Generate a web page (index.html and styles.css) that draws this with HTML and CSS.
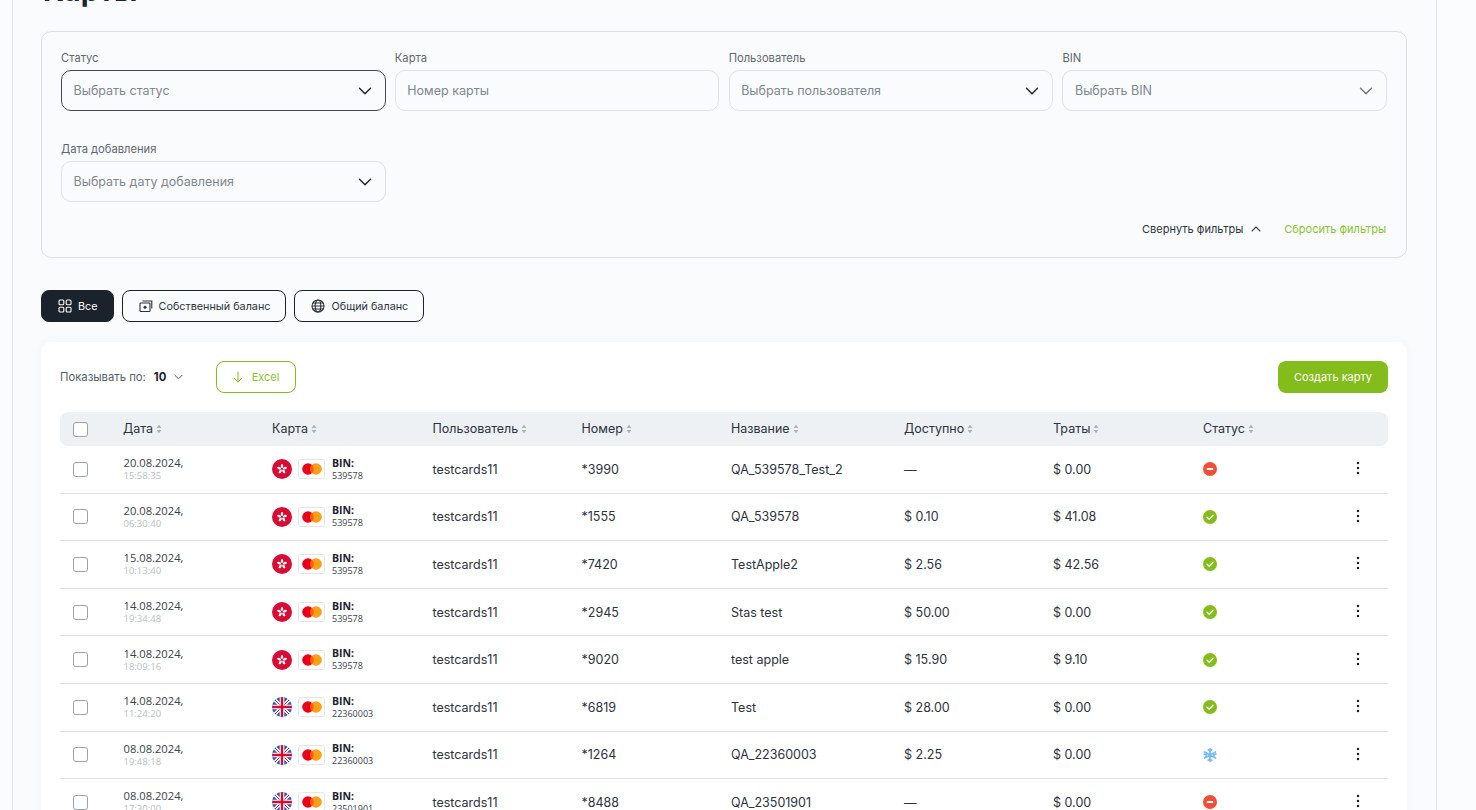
FILE: index.html
```html
<!DOCTYPE html>
<html lang="ru">
<head>
<meta charset="utf-8">
<title>Карты</title>
<link rel="stylesheet" href="styles.css">
</head>
<body>
<svg class="defs" width="0" height="0" aria-hidden="true">
  <defs>
    <symbol id="chev" viewBox="0 0 16 16"><path d="M2.5 5.2 8 10.8l5.5-5.6" fill="none" stroke="currentColor" stroke-width="1.35" stroke-linecap="round" stroke-linejoin="round"/></symbol>
    <symbol id="sort" viewBox="0 0 6 10"><path d="M3 .8 5.4 4H.6zM3 9.2.6 6h4.8z" fill="#a9b0b8"/></symbol>
    <symbol id="hk" viewBox="0 0 20 20"><circle cx="10" cy="10" r="10" fill="#d80b33"/><g fill="#fff"><ellipse cx="10" cy="7" rx="1.2" ry="2.1"/><ellipse cx="10" cy="7" rx="1.2" ry="2.1" transform="rotate(72 10 10)"/><ellipse cx="10" cy="7" rx="1.2" ry="2.1" transform="rotate(144 10 10)"/><ellipse cx="10" cy="7" rx="1.2" ry="2.1" transform="rotate(216 10 10)"/><ellipse cx="10" cy="7" rx="1.2" ry="2.1" transform="rotate(288 10 10)"/></g></symbol>
    <clipPath id="ukclip"><circle cx="10" cy="10" r="10"/></clipPath>
    <symbol id="uk" viewBox="0 0 20 20"><g clip-path="url(#ukclip)"><rect width="20" height="20" fill="#2a5cb0"/><path d="M0 0 20 20M20 0 0 20" stroke="#fff" stroke-width="3.4"/><path d="M0 0 20 20M20 0 0 20" stroke="#d80b33" stroke-width="1"/><path d="M10 0v20M0 10h20" stroke="#fff" stroke-width="4.6"/><path d="M10 0v20M0 10h20" stroke="#d80b33" stroke-width="2.4"/></g></symbol>
    <symbol id="mc" viewBox="0 0 20 12"><circle cx="6" cy="6" r="5.8" fill="#eb001b"/><circle cx="14" cy="6" r="5.8" fill="#f79e1b"/><path d="M10 1.8a5.8 5.8 0 0 1 0 8.4 5.8 5.8 0 0 1 0-8.4z" fill="#ff5f00"/></symbol>
    <symbol id="ok" viewBox="0 0 14 14"><circle cx="7" cy="7" r="7" fill="#84bd1b"/><path d="M4 7.2 6.1 9.2 10 5.2" fill="none" stroke="#fff" stroke-width="1.4" stroke-linecap="round" stroke-linejoin="round"/></symbol>
    <symbol id="stop" viewBox="0 0 14 14"><circle cx="7" cy="7" r="7" fill="#f04e37"/><rect x="3.6" y="6" width="6.8" height="2" rx="1" fill="#fff"/></symbol>
    <symbol id="snow" viewBox="0 0 14 14"><g fill="none" stroke="#74bdf7" stroke-width="1.7" stroke-linecap="round"><path d="M7 .8v12.4M1.6 3.9l10.8 6.2M12.4 3.9 1.6 10.1"/><path d="M5.3 1.6 7 3.2l1.7-1.6M5.3 12.4 7 10.8l1.7 1.6M1 6l2.3.6L2.6 8.8M13 6l-2.3.6.7 2.2"/></g></symbol>
    <symbol id="dots" viewBox="0 0 4 14"><circle cx="2" cy="2" r="1.25" fill="#1a222c"/><circle cx="2" cy="7" r="1.25" fill="#1a222c"/><circle cx="2" cy="12" r="1.25" fill="#1a222c"/></symbol>
  </defs>
</svg>
<main class="page">
  <h1 class="title">Карты</h1>

  <section class="filters">
    <div class="filter-grid">
      <div class="field"><label class="field-label">Статус</label>
        <div class="control focused"><span>Выбрать статус</span><svg class="chev"><use href="#chev"/></svg></div></div>
      <div class="field"><label class="field-label">Карта</label>
        <div class="control"><span>Номер карты</span></div></div>
      <div class="field"><label class="field-label">Пользователь</label>
        <div class="control"><span>Выбрать пользователя</span><svg class="chev"><use href="#chev"/></svg></div></div>
      <div class="field"><label class="field-label">BIN</label>
        <div class="control"><span>Выбрать BIN</span><svg class="chev muted"><use href="#chev"/></svg></div></div>
      <div class="field"><label class="field-label">Дата добавления</label>
        <div class="control"><span>Выбрать дату добавления</span><svg class="chev"><use href="#chev"/></svg></div></div>
    </div>
    <div class="filter-actions">
      <span class="collapse">Свернуть фильтры<svg class="chev-up" viewBox="0 0 10 6"><path d="M1 5 5 1l4 4" fill="none" stroke="#3d4650" stroke-width="1.1" stroke-linecap="round" stroke-linejoin="round"/></svg></span>
      <span class="reset">Сбросить фильтры</span>
    </div>
  </section>

  <nav class="tabs">
    <button class="tab active"><svg class="tab-icon" viewBox="0 0 14 14"><g fill="none" stroke="currentColor" stroke-width="1.1"><rect x="1" y="1" width="4.8" height="4.8" rx="1"/><rect x="8.2" y="1" width="4.8" height="4.8" rx="1"/><rect x="1" y="8.2" width="4.8" height="4.8" rx="1"/><rect x="8.2" y="8.2" width="4.8" height="4.8" rx="1"/></g></svg>Все</button>
    <button class="tab"><svg class="tab-icon" viewBox="0 0 14 14"><g fill="none" stroke="currentColor" stroke-width="1.1"><rect x="1" y="4" width="10" height="8.5" rx=".8"/><path d="M3.5 2h9.3v7.5"/></g><circle cx="6" cy="8.2" r="1.5" fill="currentColor"/></svg>Собственный баланс</button>
    <button class="tab"><svg class="tab-icon" viewBox="0 0 14 14"><g fill="none" stroke="currentColor" stroke-width="1.1"><circle cx="7" cy="7" r="6"/><ellipse cx="7" cy="7" rx="2.8" ry="6"/><path d="M1 7h12M1.8 4h10.4M1.8 10h10.4"/></g></svg>Общий баланс</button>
  </nav>

  <section class="card">
    <div class="toolbar">
      <div class="per-page">Показывать по:<b>10</b><svg class="chev-small" viewBox="0 0 10 6"><path d="M1 1l4 4 4-4" fill="none" stroke="#3d4650" stroke-width="1" stroke-linecap="round" stroke-linejoin="round"/></svg></div>
      <button class="excel"><svg class="down" viewBox="0 0 10 12"><path d="M5 1v10M1.5 7.5 5 11l3.5-3.5" fill="none" stroke="#84bd1b" stroke-width="1" stroke-linecap="round" stroke-linejoin="round"/></svg>Excel</button>
      <button class="create">Создать карту</button>
    </div>

    <div class="row head">
      <span class="check"></span>
      <span>Дата<svg class="sort"><use href="#sort"/></svg></span>
      <span>Карта<svg class="sort"><use href="#sort"/></svg></span>
      <span>Пользователь<svg class="sort"><use href="#sort"/></svg></span>
      <span>Номер<svg class="sort"><use href="#sort"/></svg></span>
      <span>Название<svg class="sort"><use href="#sort"/></svg></span>
      <span>Доступно<svg class="sort"><use href="#sort"/></svg></span>
      <span>Траты<svg class="sort"><use href="#sort"/></svg></span>
      <span>Статус<svg class="sort"><use href="#sort"/></svg></span>
    </div>

    <div class="row"><span class="check"></span><div class="date">20.08.2024,<small>15:58:35</small></div><div class="cardcell"><svg class="flag"><use href="#hk"/></svg><span class="mcbox"><svg class="mc"><use href="#mc"/></svg></span><div class="bin"><b>BIN:</b><small>539578</small></div></div><span>testcards11</span><span>*3990</span><span>QA_539578_Test_2</span><span>—</span><span>$ 0.00</span><svg class="status"><use href="#stop"/></svg><svg class="dots"><use href="#dots"/></svg></div>
    <div class="row"><span class="check"></span><div class="date">20.08.2024,<small>06:30:40</small></div><div class="cardcell"><svg class="flag"><use href="#hk"/></svg><span class="mcbox"><svg class="mc"><use href="#mc"/></svg></span><div class="bin"><b>BIN:</b><small>539578</small></div></div><span>testcards11</span><span>*1555</span><span>QA_539578</span><span>$ 0.10</span><span>$ 41.08</span><svg class="status"><use href="#ok"/></svg><svg class="dots"><use href="#dots"/></svg></div>
    <div class="row"><span class="check"></span><div class="date">15.08.2024,<small>10:13:40</small></div><div class="cardcell"><svg class="flag"><use href="#hk"/></svg><span class="mcbox"><svg class="mc"><use href="#mc"/></svg></span><div class="bin"><b>BIN:</b><small>539578</small></div></div><span>testcards11</span><span>*7420</span><span>TestApple2</span><span>$ 2.56</span><span>$ 42.56</span><svg class="status"><use href="#ok"/></svg><svg class="dots"><use href="#dots"/></svg></div>
    <div class="row"><span class="check"></span><div class="date">14.08.2024,<small>19:34:48</small></div><div class="cardcell"><svg class="flag"><use href="#hk"/></svg><span class="mcbox"><svg class="mc"><use href="#mc"/></svg></span><div class="bin"><b>BIN:</b><small>539578</small></div></div><span>testcards11</span><span>*2945</span><span>Stas test</span><span>$ 50.00</span><span>$ 0.00</span><svg class="status"><use href="#ok"/></svg><svg class="dots"><use href="#dots"/></svg></div>
    <div class="row"><span class="check"></span><div class="date">14.08.2024,<small>18:09:16</small></div><div class="cardcell"><svg class="flag"><use href="#hk"/></svg><span class="mcbox"><svg class="mc"><use href="#mc"/></svg></span><div class="bin"><b>BIN:</b><small>539578</small></div></div><span>testcards11</span><span>*9020</span><span>test apple</span><span>$ 15.90</span><span>$ 9.10</span><svg class="status"><use href="#ok"/></svg><svg class="dots"><use href="#dots"/></svg></div>
    <div class="row"><span class="check"></span><div class="date">14.08.2024,<small>11:24:20</small></div><div class="cardcell"><svg class="flag"><use href="#uk"/></svg><span class="mcbox"><svg class="mc"><use href="#mc"/></svg></span><div class="bin"><b>BIN:</b><small>22360003</small></div></div><span>testcards11</span><span>*6819</span><span>Test</span><span>$ 28.00</span><span>$ 0.00</span><svg class="status"><use href="#ok"/></svg><svg class="dots"><use href="#dots"/></svg></div>
    <div class="row"><span class="check"></span><div class="date">08.08.2024,<small>19:48:18</small></div><div class="cardcell"><svg class="flag"><use href="#uk"/></svg><span class="mcbox"><svg class="mc"><use href="#mc"/></svg></span><div class="bin"><b>BIN:</b><small>22360003</small></div></div><span>testcards11</span><span>*1264</span><span>QA_22360003</span><span>$ 2.25</span><span>$ 0.00</span><svg class="status"><use href="#snow"/></svg><svg class="dots"><use href="#dots"/></svg></div>
    <div class="row"><span class="check"></span><div class="date">08.08.2024,<small>17:30:00</small></div><div class="cardcell"><svg class="flag"><use href="#uk"/></svg><span class="mcbox"><svg class="mc"><use href="#mc"/></svg></span><div class="bin"><b>BIN:</b><small>23501901</small></div></div><span>testcards11</span><span>*8488</span><span>QA_23501901</span><span>—</span><span>$ 0.00</span><svg class="status"><use href="#stop"/></svg><svg class="dots"><use href="#dots"/></svg></div>
  </section>
</main>
</body>
</html>
```
FILE: styles.css
```css
* { box-sizing: border-box; }
html, body { height: 810px; overflow: hidden; }
body {
  margin: 0;
  background: #fbfcfe;
  font-family: Inter, "Liberation Sans", sans-serif;
  color: #1a222c;
}
.defs { position: absolute; }
.page {
  display: flow-root;
  margin-left: 12px;
  width: 1425px;
  height: 810px;
  padding: 0 29px 0 28px;
  border-left: 1px solid #e1e4e8;
  border-right: 1px solid #e1e4e8;
  background: #fafbfd;
}
.title {
  margin: -29px 0 0 2px;
  height: 60px;
  font-size: 29px;
  line-height: 40px;
  font-weight: 700;
  color: #1a222c;
}
.filters {
  height: 227px;
  border: 1px solid #dcdfe3;
  border-radius: 10px;
  padding: 19px 19px 0;
  display: flex;
  flex-direction: column;
}
.filter-grid {
  display: grid;
  grid-template-columns: repeat(4, 1fr);
  column-gap: 9.33px;
  row-gap: 31px;
}
.field-label {
  display: block;
  height: 19px;
  font-size: 11.2px;
  line-height: 14px;
  color: #5f6770;
}
.control {
  height: 41px;
  border: 1px solid #dfe2e6;
  border-radius: 10px;
  padding: 0 12px 0 11.5px;
  display: flex;
  align-items: center;
  justify-content: space-between;
  font-size: 12.5px;
  color: #7f8790;
}
.control.focused { border-color: #3f4854; }
.chev { width: 16px; height: 16px; color: #1a222c; }
.chev.muted { color: #6b737c; }
.filter-actions {
  margin-top: 19px;
  display: flex;
  justify-content: flex-end;
  align-items: center;
  gap: 23px;
  padding-right: 1px;
  font-size: 11px;
  line-height: 16px;
}
.collapse { display: flex; align-items: center; gap: 8px; color: #2b333c; }
.chev-up { width: 10px; height: 6px; }
.reset { color: #8cc230; }
.tabs { margin-top: 32px; display: flex; gap: 8px; height: 32px; }
.tab {
  height: 32px;
  display: flex;
  align-items: center;
  gap: 6px;
  padding: 0 15px 0 16px;
  border: 1px solid #1a222c;
  border-radius: 8px;
  background: transparent;
  font: 400 10.8px Inter, "Liberation Sans", sans-serif;
  color: #2b333c;
}
.tab.active { background: #1a222c; color: #fff; }
.tab-icon { width: 14px; height: 14px; }
.card {
  margin-top: 20px;
  height: 500px;
  background: #fff;
  border-radius: 10px 10px 0 0;
  padding: 19px 19px 0;
  box-shadow: 0 0 12px rgba(30, 50, 80, .03);
}
.toolbar { display: flex; align-items: center; height: 32px; margin-bottom: 19px; }
.per-page { width: 156px; display: flex; align-items: center; font-size: 11.3px; color: #555d66; }
.per-page b { margin: 0 8px; color: #1a222c; font-weight: 700; }
.chev-small { width: 9px; height: 6px; }
.excel {
  width: 80px;
  height: 32px;
  display: flex;
  align-items: center;
  justify-content: center;
  gap: 9px;
  border: 1px solid #84bd1b;
  border-radius: 8px;
  background: transparent;
  font: 400 11px Inter, "Liberation Sans", sans-serif;
  color: #8cc230;
}
.down { width: 10px; height: 12px; }
.create {
  margin-left: auto;
  width: 110px;
  height: 32px;
  border: 0;
  border-radius: 8px;
  background: #84bd1b;
  color: #fff;
  font: 400 11px Inter, "Liberation Sans", sans-serif;
}
.row {
  width: 1328px;
  height: 47.6px;
  display: grid;
  grid-template-columns: 50px 149px 160.5px 149px 149.5px 173px 149px 150px 1fr auto;
  align-items: center;
  padding-left: 13px;
  border-bottom: 1px solid #dde0e4;
  font-size: 12.5px;
  color: #2b333c;
}
.row.head {
  height: 34px;
  padding-bottom: 1px;
  background: #eef1f4;
  border: 0;
  border-radius: 8px;
  color: #2b333c;
}
.check {
  width: 15px;
  height: 15px;
  border: 1px solid #9aa2ab;
  border-radius: 3px;
  background: #fff;
}
.head .check { margin-top: 1px; }
.sort { width: 6px; height: 10px; margin-left: 3px; vertical-align: -1px; }
.date { font: 11.2px/13px "Open Sans", sans-serif; color: #3a424b; margin-left: .5px; }
.date small { display: block; font-size: 9.5px; line-height: 13px; color: #b9bec4; }
.cardcell { display: flex; align-items: center; }
.flag { width: 20px; height: 20px; flex: none; }
.mcbox {
  margin-left: 6px;
  width: 27px;
  height: 20px;
  border: 1px solid #e5e7ea;
  border-radius: 3px;
  display: flex;
  align-items: center;
  justify-content: center;
}
.mc { width: 20px; height: 12px; }
.bin { margin-left: 7px; font: 10.5px/13px "Open Sans", sans-serif; color: #1a222c; }
.bin b { display: block; font-weight: 700; }
.bin small { display: block; font-size: 9px; line-height: 12px; color: #3a424b; }
.status { width: 14px; height: 14px; }
.dots { width: 4px; height: 14px; margin-right: 28px; margin-top: -2px; }
```
